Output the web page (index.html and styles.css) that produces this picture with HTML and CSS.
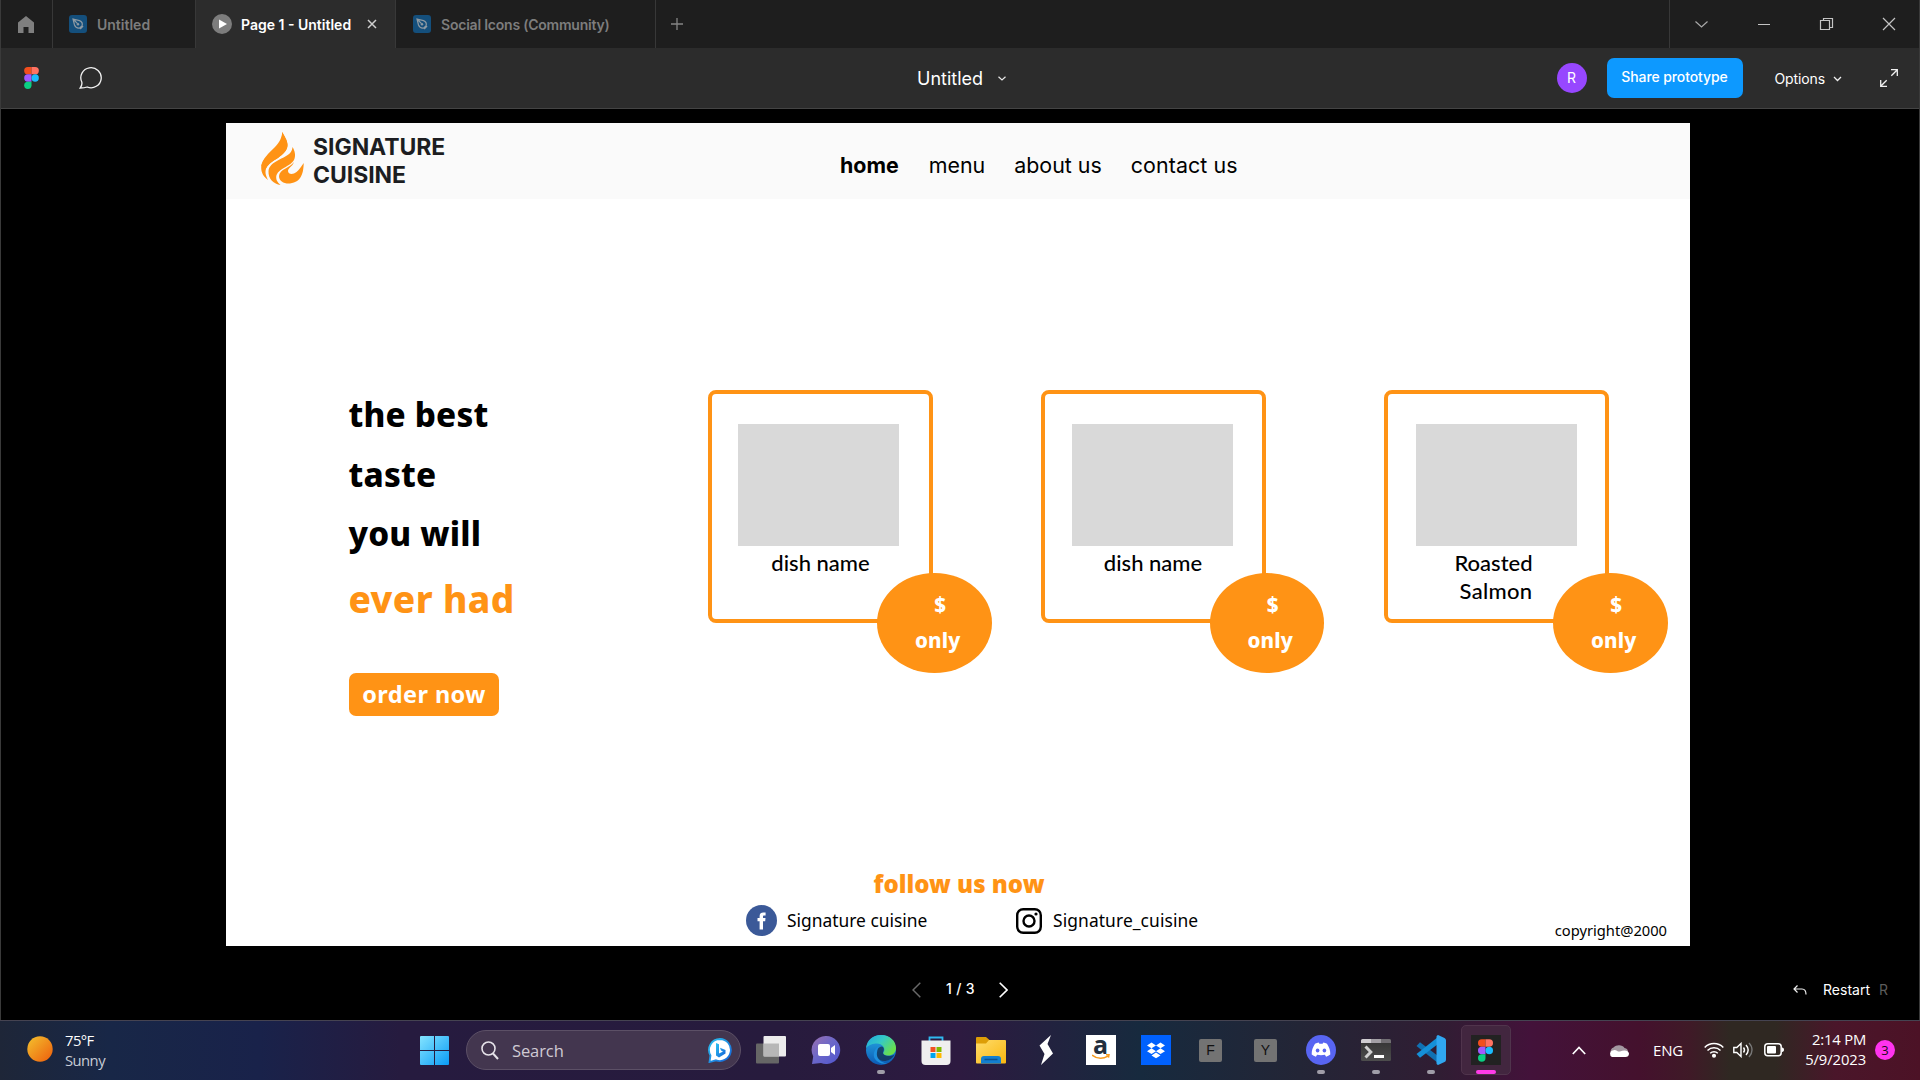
FILE: index.html
```html
<!DOCTYPE html>
<html lang="en">
<head>
<meta charset="utf-8">
<title>Page 1 - Untitled</title>
<link rel="stylesheet" href="styles.css">
</head>
<body>
<svg width="0" height="0" class="defs" aria-hidden="true">
  <defs>
    <linearGradient id="sun" x1="0" y1="0" x2="1" y2="1"><stop offset="0" stop-color="#f3c22e"/><stop offset="1" stop-color="#ee5d0c"/></linearGradient>
    <linearGradient id="win" x1="0" y1="0" x2="1" y2="1"><stop offset="0" stop-color="#84e4ff"/><stop offset="1" stop-color="#0a9bf5"/></linearGradient>
    <linearGradient id="bing" x1="0" y1="0" x2="1" y2="1"><stop offset="0" stop-color="#2bc3f0"/><stop offset="1" stop-color="#1560d8"/></linearGradient>
    <linearGradient id="chat" x1="0" y1="0" x2="1" y2="1"><stop offset="0" stop-color="#9c6fae"/><stop offset=".45" stop-color="#6d68c8"/><stop offset="1" stop-color="#4f55cf"/></linearGradient>
    <linearGradient id="edgeTop" x1="0" y1="0" x2="1" y2=".6"><stop offset="0" stop-color="#1fa7e0"/><stop offset=".5" stop-color="#35c9c6"/><stop offset="1" stop-color="#6ae04a"/></linearGradient>
    <linearGradient id="edgeLow" x1="0" y1="0" x2="0" y2="1"><stop offset="0" stop-color="#26a9e4"/><stop offset="1" stop-color="#0c59b4"/></linearGradient>
    <linearGradient id="folder" x1="0" y1="0" x2="1" y2="1"><stop offset="0" stop-color="#ffdc6b"/><stop offset="1" stop-color="#f9b70f"/></linearGradient>
    <linearGradient id="term" x1="0" y1="0" x2="0" y2="1"><stop offset="0" stop-color="#333"/><stop offset="1" stop-color="#4d4d4d"/></linearGradient>
    <symbol id="figma" viewBox="0 0 16 24">
      <path fill="#f24e1e" d="M4 0h4v8H4a4 4 0 0 1 0-8z"/><path fill="#ff7262" d="M8 0h4a4 4 0 0 1 0 8H8z"/>
      <path fill="#a259ff" d="M4 8h4v8H4a4 4 0 0 1 0-8z"/><circle fill="#1abcfe" cx="12" cy="12" r="4"/>
      <path fill="#0acf83" d="M4 16h4v4a4 4 0 1 1-4-4z"/>
    </symbol>
    <symbol id="pen" viewBox="0 0 18 18">
      <rect width="18" height="18" rx="3" fill="#144f7c"/>
      <path d="M4 4l6.500 1.600c2 .8 3.200 3 2.600 5.200L10.800 13C8.500 13.400 6.300 12 5.500 10zM4 4l4.500 4.700M11.200 14l2.900-2.900" fill="none" stroke="#8e9aa3" stroke-width="1.200"/><circle cx="9" cy="9.200" r="1.200" fill="#8e9aa3"/>
    </symbol>
  </defs>
</svg>

<div class="window">
  <div class="tabbar">
    <div class="tab tab-home"><svg width="16" height="17" viewBox="0 0 16 17"><path d="M8 0l8 6.500V17h-5.500v-6h-5v6H0V6.500z" fill="#7f7f7f"/></svg></div>
    <div class="tab tab-file"><svg width="18" height="18"><use href="#pen"/></svg><span>Untitled</span></div>
    <div class="tab tab-active">
      <svg width="20" height="20" viewBox="0 0 20 20"><circle cx="10" cy="10" r="10" fill="#7d7d7d"/><path d="M7 5.500l8 4.500-8 4.500z" fill="#fff"/></svg>
      <span>Page 1 - Untitled</span>
      <svg class="tab-close" width="10" height="10" viewBox="0 0 10 10"><path d="M1 1l8 8M9 1L1 9" stroke="#cfcfcf" stroke-width="1.500"/></svg>
    </div>
    <div class="tab tab-community"><svg width="18" height="18"><use href="#pen"/></svg><span>Social Icons (Community)</span></div>
    <div class="tab-add"><svg width="12" height="12" viewBox="0 0 12 12"><path d="M6 0v12M0 6h12" stroke="#858585" stroke-width="1.300"/></svg></div>
    <div class="controls">
      <svg width="62" height="48" viewBox="0 0 62 48"><path d="M25.500 21.500l6 5.500 6-5.500" fill="none" stroke="#a9a9a9" stroke-width="1.200"/></svg>
      <svg width="62" height="48" viewBox="0 0 62 48"><path d="M26 24.500h12" stroke="#c4c4c4"/></svg>
      <svg width="63" height="48" viewBox="0 0 63 48"><path d="M26.500 20.500h9v9h-9zM29.500 20v-1.500h9v9H36" fill="none" stroke="#c4c4c4" stroke-width="1.200"/></svg>
      <svg width="62" height="48" viewBox="0 0 62 48"><path d="M26 18l12 12M38 18L26 30" stroke="#c4c4c4" stroke-width="1.200"/></svg>
    </div>
  </div>

  <div class="toolbar">
    <svg class="brand" width="15" height="22"><use href="#figma"/></svg>
    <svg width="24" height="22" viewBox="0 0 24 22"><path d="M1.200 21C3 18.700 3.200 17 2.800 15A10.200 10 0 1 1 8.200 20C6 20.800 3.500 21 1.200 21z" fill="none" stroke="#f2f2f2" stroke-width="1.300"/></svg>
    <div class="file-title"><span>Untitled</span><svg width="8" height="5" viewBox="0 0 8 5"><path d="M.5.700L4 4 7.500.700" fill="none" stroke="#e8e8e8" stroke-width="1.200"/></svg></div>
    <div class="actions">
      <div class="avatar">R</div>
      <div class="share">Share prototype</div>
      <div class="options"><span>Options</span><svg width="9" height="6" viewBox="0 0 9 6"><path d="M1 1l3.500 3.500L8 1" fill="none" stroke="#f0f0f0" stroke-width="1.300"/></svg></div>
      <svg width="18" height="18" viewBox="0 0 18 18"><path d="M11 .700h6.300V7M17.300.700l-6 6M.700 11v6.300H7M.700 17.300l6-6" fill="none" stroke="#f0f0f0" stroke-width="1.300"/></svg>
    </div>
  </div>

  <div class="stage">
    <div class="slide">
      <header class="site-header">
        <svg width="43" height="53" viewBox="0 0 43 53" fill="#ff9315">
          <path d="M21.300 0C23 4 26.500 8 26.500 13C26.500 24 9 28 5.300 36C3.800 40 4.500 43 7 48C3 45 0 41 .2 35C1 25 15 20 19 11C20.500 8 21 4 21.300 0z"/>
          <path d="M21.300 0C20.800 6 18.500 10 14 15C8 21 1 27 .4 34L5.300 36C9 28 26.500 24 26.500 13C26.500 8 23 4 21.300 0z"/>
          <path d="M31.500 15C34 19 35 24 33 28C30 34 18.500 36 15.500 43C14.500 47 16 50 19.500 53C13 52 7 47 7.500 39C8.500 29 24 27 29.500 20.500C31 18.500 31.300 17 31.500 15z"/>
          <path d="M33 30C31.500 34.500 27 36 27 39C27.200 42.500 32 42.800 35.500 40C38 38 40.500 34 42.700 31C42.500 40 41 50 29 51.500C23 52 18 49 18 44C18.500 37 29 36 33 30z"/>
        </svg>
        <div class="site-name">SIGNATURE<br>CUISINE</div>
        <nav><b>home</b><span>menu</span><span>about us</span><span class="contact">contact us</span></nav>
      </header>

      <main class="hero">
        <div class="copy">
          <div class="line">the best</div>
          <div class="line">taste</div>
          <div class="line">you will</div>
          <div class="line accent">ever had</div>
          <div class="order">order now</div>
        </div>
        <div class="card first"><div class="photo"></div><div class="name">dish name</div><div class="price"><span class="sum">$</span><span>only</span></div></div>
        <div class="card second"><div class="photo"></div><div class="name">dish name</div><div class="price"><span class="sum">$</span><span>only</span></div></div>
        <div class="card third"><div class="photo"></div><div class="name"><div class="upper">Roasted</div><div class="lower">Salmon</div></div><div class="price"><span class="sum">$</span><span>only</span></div></div>
      </main>

      <footer class="site-footer">
        <div class="follow">follow us now</div>
        <div class="socials">
          <svg width="31" height="31" viewBox="0 0 31 31"><circle cx="15.500" cy="15.500" r="15.500" fill="#3b5998"/><path d="M13.600 24.500v-8.300H11.500v-3.200h2.100v-1.900c0-2.700 1.600-3.700 3.700-3.700h2.300v3.100h-1.500c-.8 0-1.100.4-1.100 1.100v1.400h2.500l-.3 3.200h-2.200v8.300z" fill="#fff"/></svg>
          <span class="facebook">Signature cuisine</span>
          <svg class="ig" width="26" height="26" viewBox="0 0 26 26" fill="none" stroke="#000"><rect x="1.200" y="1.200" width="23.600" height="23.600" rx="6" stroke-width="2.400"/><circle cx="13" cy="13" r="5.500" stroke-width="2.400"/><circle cx="20" cy="6" r="1.600" fill="#000" stroke="none"/></svg>
          <span class="instagram">Signature_cuisine</span>
          <span class="copyright">copyright@2000</span>
        </div>
      </footer>
    </div>

    <div class="pager">
      <svg width="9" height="16" viewBox="0 0 9 16"><path d="M8.300.700L1 8l7.300 7.300" fill="none" stroke="#686868" stroke-width="1.500"/></svg>
      <span>1 / 3</span>
      <svg width="9" height="16" viewBox="0 0 9 16"><path d="M.700.700L8 8 .700 15.300" fill="none" stroke="#fff" stroke-width="1.600"/></svg>
      <div class="restart">
        <svg width="14" height="10" viewBox="0 0 14 10"><path d="M4.500.500L1 4l3.500 3.500M1 4h8c2.500 0 4 2 4 5.500" fill="none" stroke="#f0f0f0" stroke-width="1.200"/></svg>
        <span>Restart</span><span class="key">R</span>
      </div>
    </div>
  </div>
</div>

<div class="taskbar">
  <svg class="sun" width="26" height="26" viewBox="0 0 26 26"><circle cx="13" cy="13" r="12.700" fill="url(#sun)"/></svg>
  <div class="weather"><div>75°F</div><div class="dim">Sunny</div></div>
  <svg class="start" width="29" height="29" viewBox="0 0 29 29"><path d="M1 0h13v14H0V1a1 1 0 0 1 1-1zM15 0h13a1 1 0 0 1 1 1v13H15zM0 15h14v14H1a1 1 0 0 1-1-1zM15 15h14v13a1 1 0 0 1-1 1H15z" fill="url(#win)"/></svg>
  <div class="search">
    <svg width="18" height="19" viewBox="0 0 18 19"><circle cx="7.500" cy="7.500" r="6.500" fill="none" stroke="#e6e3ea" stroke-width="1.600"/><path d="M12 12.500l5 5.500" stroke="#e6e3ea" stroke-width="2"/></svg>
    <span>Search</span>
    <svg class="bing" width="24" height="25" viewBox="0 0 24 25"><path d="M12 1a11 11 0 1 1-4 21.300L1.500 24l1-6.500A11 11 0 0 1 12 1z" fill="#fff" stroke="url(#bing)" stroke-width="1.800"/><path d="M8 5l3 1.200v9.300l4-2-2-1-1-2.700 5.500 2.200v3.500L11 19.500 8 17.500z" fill="url(#bing)"/></svg>
  </div>

  <div class="apps">
    <div class="app"><svg width="30" height="30" viewBox="0 0 30 30"><rect y="8.500" width="23" height="20" rx="1" fill="#666"/><rect x="7.500" y="1" width="22.500" height="20.500" rx="1" fill="#ececec"/><path d="M7.500 8.500H23v13H7.500z" fill="#a5a5a5" opacity=".75"/></svg></div>
    <div class="app"><svg width="30" height="30" viewBox="0 0 30 30"><path d="M15 1a14 14 0 1 1-5 27L1 29l1.200-7.500A14 14 0 0 1 15 1z" fill="url(#chat)"/><rect x="7" y="9" width="12" height="12" rx="2" fill="#fff"/><path d="M20 13l4-3v10l-4-3z" fill="#fff"/></svg></div>
    <div class="app open"><svg width="30" height="30" viewBox="0 0 30 30"><circle cx="15" cy="15" r="15" fill="url(#edgeLow)"/><path d="M0 13C1 5 7 0 15 0c9 0 15 6 15 13 0 5-3.500 7.500-8 7.500-3.500 0-5.500-1.500-4.500-3 3-4.500-2-10-8-9-4 .4-7.500 2-9.500 4.500z" fill="url(#edgeTop)"/><path d="M10 19c0-4 2.500-7 6-7.500 2 .5 2.500 3 1.200 5.200-1.700 2.800 5 6.300 11.300 3C25 26 18 27 14 25c-2.500-1.500-4-3.500-4-6z" fill="#14304f" opacity=".75"/><path d="M13 11c-5 3-6.500 9-4 13 2.500 4 8 5.500 12 4.500-7-1-11-6-10-11 .4-3 1-5 2-6.500z" fill="#1d8fdd"/></svg></div>
    <div class="app"><svg width="30" height="30" viewBox="0 0 30 30"><path d="M8.500 7V2.500h13V7" fill="none" stroke="#2fb9ef" stroke-width="1.800"/><path d="M.500 5.500h29V26a4 4 0 0 1-4 4h-21a4 4 0 0 1-4-4z" fill="#efefef"/><path d="M9.500 12h5v5h-5z" fill="#f25022"/><path d="M15.500 12h5v5h-5z" fill="#7fba00"/><path d="M9.500 18h5v5h-5z" fill="#00a4ef"/><path d="M15.500 18h5v5h-5z" fill="#ffb900"/></svg></div>
    <div class="app"><svg width="30" height="30" viewBox="0 0 30 30"><path d="M0 3a1 1 0 0 1 1-1h9l3.500 3H29v10H0z" fill="#dd9d07"/><path d="M0 8.500h10l3-3.500h16a1 1 0 0 1 1 1v21.500a1 1 0 0 1-1 1H1a1 1 0 0 1-1-1z" fill="url(#folder)"/><path d="M5 28.500V24a3 3 0 0 1 3-3h14a3 3 0 0 1 3 3v4.500z" fill="#137fcf"/><path d="M8.500 24.500h13" stroke="#0b5291" stroke-width="1.500"/></svg></div>
    <div class="app"><svg width="30" height="30" viewBox="0 0 30 30"><path d="M20 0L8.500 10.500l5 8.500-3.500 11L22 18.500 16.500 9z" fill="#fff"/></svg></div>
    <div class="app"><div class="amazon"><span>a</span><svg width="18" height="6" viewBox="0 0 18 6"><path d="M0 1c5 4 11 4 16 1.200M14 .700h3l-.5 3" fill="none" stroke="#f79a1c" stroke-width="1.500"/></svg></div></div>
    <div class="app"><svg width="30" height="30" viewBox="0 0 30 30"><path fill="#0061fe" d="M0 0h30v30H0z"/><path d="M10.500 7.500l4.500 2.900-4.500 2.900L6 10.400zM19.500 7.500l4.500 2.900-4.500 2.900-4.500-2.900zM10.500 13.300l4.500 2.900-4.500 2.900L6 16.200zM19.500 13.300l4.500 2.900-4.500 2.900-4.500-2.900zM15 17.500l4.500 2.900-4.500 2.900-4.500-2.900z" fill="#fff"/></svg></div>
    <div class="app"><div class="keycap">F</div></div>
    <div class="app"><div class="keycap">Y</div></div>
    <div class="app open"><svg width="30" height="30" viewBox="0 0 30 30"><circle cx="15" cy="15" r="15" fill="#5865f2"/><path d="M9 8.800c1.200-.7 2.500-1 3.700-1.200l.7 1.200h3.200l.7-1.200c1.300.2 2.500.5 3.700 1.200 2.300 3.600 3.500 7 3.300 10.800-1.300 1.100-2.700 1.800-4.200 2.100l-1.200-1.900c-2.500.6-5.300.6-7.800 0l-1.200 1.900c-1.500-.3-2.900-1-4.200-2.100C5.500 15.800 6.700 12.400 9 8.800z" fill="#fff"/><ellipse cx="11.600" cy="15.500" rx="1.800" ry="2" fill="#5865f2"/><ellipse cx="18.400" cy="15.500" rx="1.800" ry="2" fill="#5865f2"/></svg></div>
    <div class="app open"><svg width="30" height="30" viewBox="0 0 30 30"><rect y="4" width="30" height="22" rx="1.500" fill="url(#term)"/><path d="M1.500 4H10v4H0V5.500A1.500 1.500 0 0 1 1.500 4z" fill="#d0cdd1"/><path d="M10 4h10v4H10z" fill="#a29fa4"/><path d="M20 4h8.500A1.500 1.500 0 0 1 30 5.500V8H20z" fill="#716e73"/><path d="M4.500 11.500l5.300 5.500-5.300 5.500" fill="none" stroke="#d0d0d0" stroke-width="3"/><path d="M13 20h10v3H13z" fill="#fff"/></svg></div>
    <div class="app open"><svg width="30" height="30" viewBox="0 0 30 30"><path d="M.5 11L4 7.300 22 21v7z" fill="#1071b3"/><path d="M.5 19L4 22.700 22 9V2z" fill="#1590d8"/><path d="M22 0l6.500 3A2.500 2.500 0 0 1 30 5.300v19.400A2.500 2.500 0 0 1 28.500 27L22 30c-1.500-.5-1.500-1.200-1.500-2.500v-25C20.500 1.200 20.500.500 22 0z" fill="#30a7f0"/></svg></div>
    <div class="app open current"><div class="figma-app"><svg width="15" height="23"><use href="#figma"/></svg></div></div>
  </div>

  <div class="tray">
    <svg class="caret" width="14" height="9" viewBox="0 0 14 9"><path d="M.800 8L7 1.500 13.200 8" fill="none" stroke="#fff" stroke-width="1.700"/></svg>
    <svg class="cloud" width="20" height="13" viewBox="0 0 20 13"><path d="M2 9a4 4 0 0 1 2.500-5.500A6.500 5.500 0 0 1 15.500 4 4 4 0 0 1 19 8z" fill="#a397a0"/><path d="M3 13a3.500 3.500 0 0 1 .5-6.500C7 4.500 8 8 11 7.500c4-1.500 8-1.500 9 2 0 2.500-1.500 3.500-3.500 3.500z" fill="#fff"/></svg>
    <span class="lang">ENG</span>
    <svg class="wifi" width="20" height="16" viewBox="0 0 20 16" fill="none" stroke="#fff" stroke-width="1.500"><path d="M.700 5.500a13 13 0 0 1 18.600 0M3.500 8.500a9.200 9.200 0 0 1 13 0M6.200 11.300a5.400 5.400 0 0 1 7.600 0"/><circle cx="10" cy="13.700" r="1.300" fill="#fff"/></svg>
    <svg class="volume" width="20" height="16" viewBox="0 0 20 16" fill="none" stroke="#fff" stroke-width="1.400"><path d="M.800 5.500h3L8 1.500v13l-4.200-4h-3z"/><path d="M10.500 5.500c1.200 1.500 1.200 3.500 0 5M13 3c2.600 3 2.600 7 0 10"/><path d="M16 1c4 4 4 10 0 14" stroke="#777"/></svg>
    <svg class="battery" width="20" height="14" viewBox="0 0 20 14"><rect x=".800" y=".800" width="16.400" height="12" rx="3" fill="none" stroke="#fff" stroke-width="1.500"/><rect x="3" y="3" width="9" height="7.600" rx="1" fill="#fff"/><path d="M18 4.500c1.300.2 2 .8 2 2.300s-.7 2-2 2.300z" fill="#fff"/></svg>
    <div class="clock"><div class="time">2:14 PM</div><div>5/9/2023</div></div>
    <div class="count">3</div>
  </div>
</div>
</body>
</html>
```
FILE: styles.css
```css
* { box-sizing: border-box; }
body {
  margin: 0;
  width: 1920px;
  height: 1080px;
  overflow: hidden;
  background: #000;
  font-family: Inter, "Liberation Sans", sans-serif;
  font-size: 14px;
  display: flex;
  flex-direction: column;
}
svg { display: block; flex: none; }
span { white-space: nowrap; }
.defs { position: absolute; }

/* application window */
.window {
  height: 1020px;
  border: solid #3a3a3a;
  border-width: 0 1px;
  display: flex;
  flex-direction: column;
}
.tabbar { display: flex; height: 48px; background: #1e1e1e; color: #7d7d7d; font-weight: 600; }
.tab { display: flex; align-items: center; border-right: 1px solid #383838; }
.tab-home { width: 52px; padding-left: 17px; }
.tab-file { width: 143px; padding-left: 16px; gap: 10px; }
.tab-active { width: 200px; padding-left: 16px; gap: 9px; background: #2c2c2c; color: #fff; }
.tab-close { margin-left: 7px; }
.tab-community { width: 260px; padding-left: 17px; gap: 10px; letter-spacing: -.22px; }
.tab-add { display: flex; align-items: center; padding-left: 15px; }
.controls { display: flex; margin-left: auto; border-left: 1px solid #383838; }

.toolbar {
  height: 61px;
  flex: none;
  background: #2c2c2c;
  border-bottom: 1px solid #444;
  color: #fff;
  display: flex;
  align-items: center;
}
.brand { margin: 0 40px 0 23px; }
.file-title { display: flex; align-items: center; gap: 15px; margin-left: 814px; font-size: 18px; }
.actions { display: flex; align-items: center; margin-left: auto; padding-right: 21px; }
.avatar {
  width: 30px;
  height: 30px;
  border-radius: 50%;
  background: #9747ff;
  line-height: 30px;
  text-align: center;
}
.share {
  width: 136px;
  height: 40px;
  margin: 0 32px 0 20px;
  border-radius: 7px;
  background: #0d99ff;
  font-weight: 500;
  line-height: 38px;
  text-align: center;
  letter-spacing: -.1px;
}
.options { display: flex; align-items: center; gap: 8px; margin-right: 38px; letter-spacing: -.12px; }
.options svg { margin-top: 2px; }

.stage { padding: 14px 0 0 225px; }

/* prototype slide */
.slide {
  width: 1464px;
  height: 823px;
  background: #fff;
  color: #000;
  display: flex;
  flex-direction: column;
}
.site-header {
  height: 76px;
  background: #fafafa;
  display: flex;
  padding: 9px 0 0 35px;
}
.site-name {
  margin: 2px 0 0 9px;
  width: 527px;
  color: #1c1d21;
  font-size: 23px;
  font-weight: 700;
  line-height: 27.500px;
  letter-spacing: -.05px;
}
nav { display: flex; gap: 29px; font-size: 21.400px; line-height: 26px; padding-top: 20px; }
nav b { margin-right: 1px; }
.contact { letter-spacing: .1px; }

.hero {
  height: 666px;
  display: flex;
  align-items: flex-start;
  padding: 191px 0 0 124px;
  font-family: "Noto Sans", "Open Sans", sans-serif;
}
.copy { width: 358px; margin-top: -5px; }
.line { margin-left: -1.500px; font-size: 33.200px; font-weight: 800; line-height: 59.500px; letter-spacing: .2px; }
.accent { color: #ff9315; font-size: 37px; line-height: 69px; letter-spacing: .4px; }
.order {
  width: 150px;
  height: 43px;
  margin: 40px 0 0 -1px;
  border-radius: 7px;
  background: #ff9315;
  color: #fff;
  font-size: 23.500px;
  font-weight: 700;
  line-height: 43px;
  letter-spacing: .4px;
  text-align: center;
}
.card {
  position: relative;
  width: 225px;
  height: 233px;
  border: 4px solid #ff9315;
  border-radius: 8px;
  padding-top: 30px;
}
.photo { width: 161px; height: 122px; margin-left: 26px; background: #d9d9d9; }
.second { margin: 0 118.500px 0 107.500px; }
.second .photo { margin-left: 27.500px; }
.third .photo { margin-left: 28px; }
.name {
  padding-top: 3px;
  font-family: Lato, sans-serif;
  font-size: 22px;
  font-weight: 500;
  line-height: 27.500px;
  text-align: center;
}
.upper { padding-right: 6px; }
.lower { padding-right: 1px; letter-spacing: .3px; }
.price {
  position: absolute;
  left: 165px;
  top: 179px;
  width: 114.500px;
  height: 100px;
  border-radius: 50%;
  background: #ff9315;
  color: #fff;
  display: flex;
  flex-direction: column;
  align-items: center;
  padding: 13px 0 0 7px;
  font-size: 20.500px;
  font-weight: 800;
  line-height: 36px;
  letter-spacing: .2px;
}
.sum { padding-left: 5px; }

.site-footer { font-family: "Noto Sans", "Open Sans", sans-serif; }
.follow {
  height: 40px;
  padding-left: 2px;
  color: #ff9315;
  font-size: 24px;
  font-weight: 900;
  line-height: 38px;
  text-align: center;
}
.socials { display: flex; align-items: flex-start; padding: 0 23px 0 520px; font-size: 17.400px; line-height: 31px; }
.facebook { margin-left: 10px; width: 229px; }
.ig { margin-top: 3px; }
.instagram { margin-left: 11px; letter-spacing: .1px; }
.copyright { margin: 15px 0 0 auto; font-size: 14.700px; line-height: 21px; }

.pager {
  height: 74px;
  display: flex;
  align-items: center;
  padding: 14px 31px 0 686px;
  color: #fff;
}
.pager > span { margin: 0 24px 0 25px; padding-bottom: 3px; font-weight: 500; letter-spacing: .3px; }
.restart { display: flex; align-items: center; margin-left: auto; }
.restart span { margin-left: 16px; padding-bottom: 1px; }
.restart .key { margin-left: 9px; color: #5c5c5c; }

/* taskbar */
.taskbar {
  height: 60px;
  border-top: 1px solid #454351;
  background: linear-gradient(90deg, #1e2638 0, #182747 110px, #19224a 260px, #261b3f 400px, #271b3d 780px, #2d1a40 960px, #172a3e 1140px, #232536 1300px, #301d33 1440px, #43123a 1530px, #44112d 1640px, #3f1a27 1690px, #2f2822 1730px, #2f2822 1775px, #4a162a 1835px, #4c1226 1920px);
  color: #fff;
  font-family: "Open Sans", "Noto Sans", sans-serif;
  display: flex;
  align-items: center;
  padding-bottom: 1px;
}
.sun { margin: 0 12px 2px 27px; }
.weather { width: 355px; font-size: 14.800px; line-height: 20px; letter-spacing: -.55px; padding-bottom: 1px; }
.dim { color: #c8cdd6; }
.search {
  width: 275px;
  height: 40px;
  margin-left: 17px;
  border: 1px solid #5c5066;
  border-radius: 20px;
  background: #43364f;
  display: flex;
  align-items: center;
  padding: 0 8px 0 14px;
  font-size: 16.500px;
  letter-spacing: -.1px;
  color: #cfcad3;
}
.search span { margin-left: 13px; }
.bing { margin-left: auto; }
.apps { display: flex; margin-left: 4.500px; }
.app {
  position: relative;
  width: 50px;
  height: 50px;
  margin-right: 5px;
  border-radius: 5px;
  display: flex;
  align-items: center;
  justify-content: center;
}
.open::after {
  content: "";
  position: absolute;
  left: 21px;
  bottom: 1px;
  width: 8px;
  height: 4px;
  border-radius: 2px;
  background: #a09da8;
}
.current { background: #42263f; border: 1px solid #50344c; }
.current::after { left: 14px; bottom: 0; width: 20px; background: #ff3be8; }
.amazon {
  width: 30px;
  height: 30px;
  background: #fff;
  color: #232f3e;
  display: flex;
  flex-direction: column;
  align-items: center;
}
.amazon span { font-size: 25px; font-weight: 700; line-height: 18px; height: 19px; }
.keycap {
  width: 23px;
  height: 23px;
  border-radius: 2px;
  background: #737373;
  color: #111;
  font-family: "Liberation Sans", sans-serif;
  font-size: 14px;
  line-height: 23px;
  text-align: center;
}
.figma-app {
  width: 30px;
  height: 30px;
  background: #222;
  display: flex;
  align-items: center;
  justify-content: center;
}
.tray { display: flex; align-items: center; margin-left: auto; padding-right: 25px; }
.caret { margin-right: 23px; }
.cloud { margin-right: 24px; }
.lang { width: 51px; font-size: 15px; letter-spacing: -.2px; padding-bottom: 1px; }
.wifi { margin-right: 9px; }
.volume { margin-right: 11px; }
.clock { width: 82px; font-size: 14.800px; line-height: 20px; letter-spacing: -.1px; text-align: right; padding-bottom: 2px; }
.time { letter-spacing: -.2px; }
.count {
  width: 20px;
  height: 20px;
  margin-left: 9px;
  border-radius: 50%;
  background: #ff33ee;
  color: #1c0a1a;
  font-size: 13px;
  line-height: 20px;
  text-align: center;
}
```
